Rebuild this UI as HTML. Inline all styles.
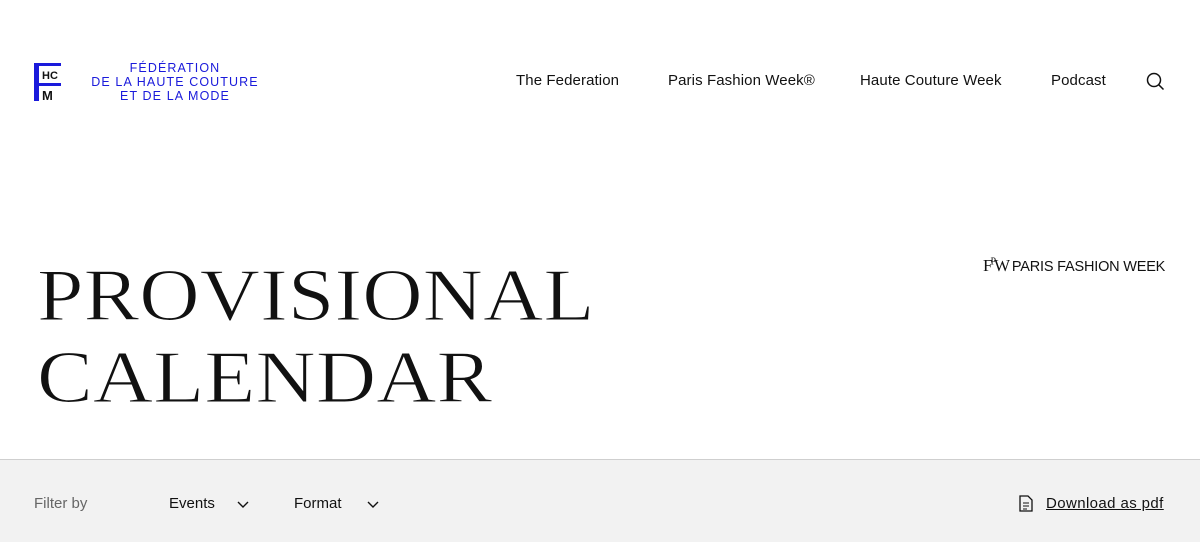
<!DOCTYPE html>
<html><head><meta charset="utf-8"><style>
*{margin:0;padding:0;box-sizing:border-box}
body{width:1200px;height:542px;background:#fff;font-family:"Liberation Sans",sans-serif;color:#111;position:relative;overflow:hidden}
.logo{position:absolute;left:34px;top:63px;width:27px;height:38px}
.logotxt{position:absolute;left:84px;top:61px;width:182px;text-align:center;color:#1a1adb;font-size:12.5px;line-height:14px;letter-spacing:1.1px}
.nav{position:absolute;top:72px;font-size:15px;color:#111;letter-spacing:0.1px}
h1{position:absolute;left:37px;top:255px;font-family:"Liberation Serif",serif;font-weight:normal;font-size:74px;line-height:82px;letter-spacing:0;transform:scaleX(1.13);transform-origin:left top;color:#111;-webkit-text-stroke:1.1px #fff}
.pfw{position:absolute;left:983px;top:256px;font-size:14.5px;letter-spacing:-0.2px;white-space:nowrap}
.bar{position:absolute;left:0;top:459px;width:1200px;height:83px;background:#f2f2f2;border-top:1px solid #cfcfcf}
.bar span{position:absolute;top:35px;font-size:15px}
</style></head><body>
<svg class="logo" viewBox="0 0 27 38">
<rect x="0" y="0" width="5" height="38" fill="#1a1adb"/>
<rect x="5" y="0" width="22" height="3" fill="#1a1adb"/>
<rect x="5" y="20" width="22" height="3" fill="#1a1adb"/>
<text x="8" y="16" font-family="Liberation Sans" font-weight="bold" font-size="11" fill="#111">HC</text>
<text x="8" y="37" font-family="Liberation Sans" font-weight="bold" font-size="13" fill="#111">M</text>
</svg>
<div class="logotxt">FÉDÉRATION<br>DE LA HAUTE COUTURE<br>ET DE LA MODE</div>
<div class="nav" style="left:516px">The Federation</div>
<div class="nav" style="left:668px">Paris Fashion Week®</div>
<div class="nav" style="left:860px">Haute Couture Week</div>
<div class="nav" style="left:1051px">Podcast</div>
<svg style="position:absolute;left:1146px;top:72px" width="19" height="19" viewBox="0 0 19 19"><circle cx="8" cy="8" r="6.5" fill="none" stroke="#111" stroke-width="1.5"/><line x1="12.8" y1="12.8" x2="17.5" y2="17.5" stroke="#111" stroke-width="1.5"/></svg>
<h1>PROVISIONAL<br>CALENDAR</h1>
<div class="pfw"><span style="font-family:'Liberation Serif',serif;font-size:17px;letter-spacing:-2px">F<sup style="font-size:10px">P</sup>W</span> PARIS FASHION WEEK</div>
<div class="bar">
<span style="left:34px;color:#666">Filter by</span>
<span style="left:169px">Events</span>
<svg style="position:absolute;left:237px;top:41px" width="12" height="8"><path d="M1 1l5 5 5-5" fill="none" stroke="#111" stroke-width="1.4"/></svg>
<span style="left:294px">Format</span>
<svg style="position:absolute;left:367px;top:41px" width="12" height="8"><path d="M1 1l5 5 5-5" fill="none" stroke="#111" stroke-width="1.4"/></svg>
<svg style="position:absolute;left:1019px;top:35px" width="14" height="17" viewBox="0 0 14 17"><path d="M1 1h8l4 4v11H1z" fill="none" stroke="#111" stroke-width="1.3"/><path d="M4 8h6M4 11h6M4 14h4" stroke="#111" stroke-width="1.1"/></svg>
<span style="left:1046px;text-decoration:underline;letter-spacing:0.4px">Download as pdf</span>
</div>
</body></html>
